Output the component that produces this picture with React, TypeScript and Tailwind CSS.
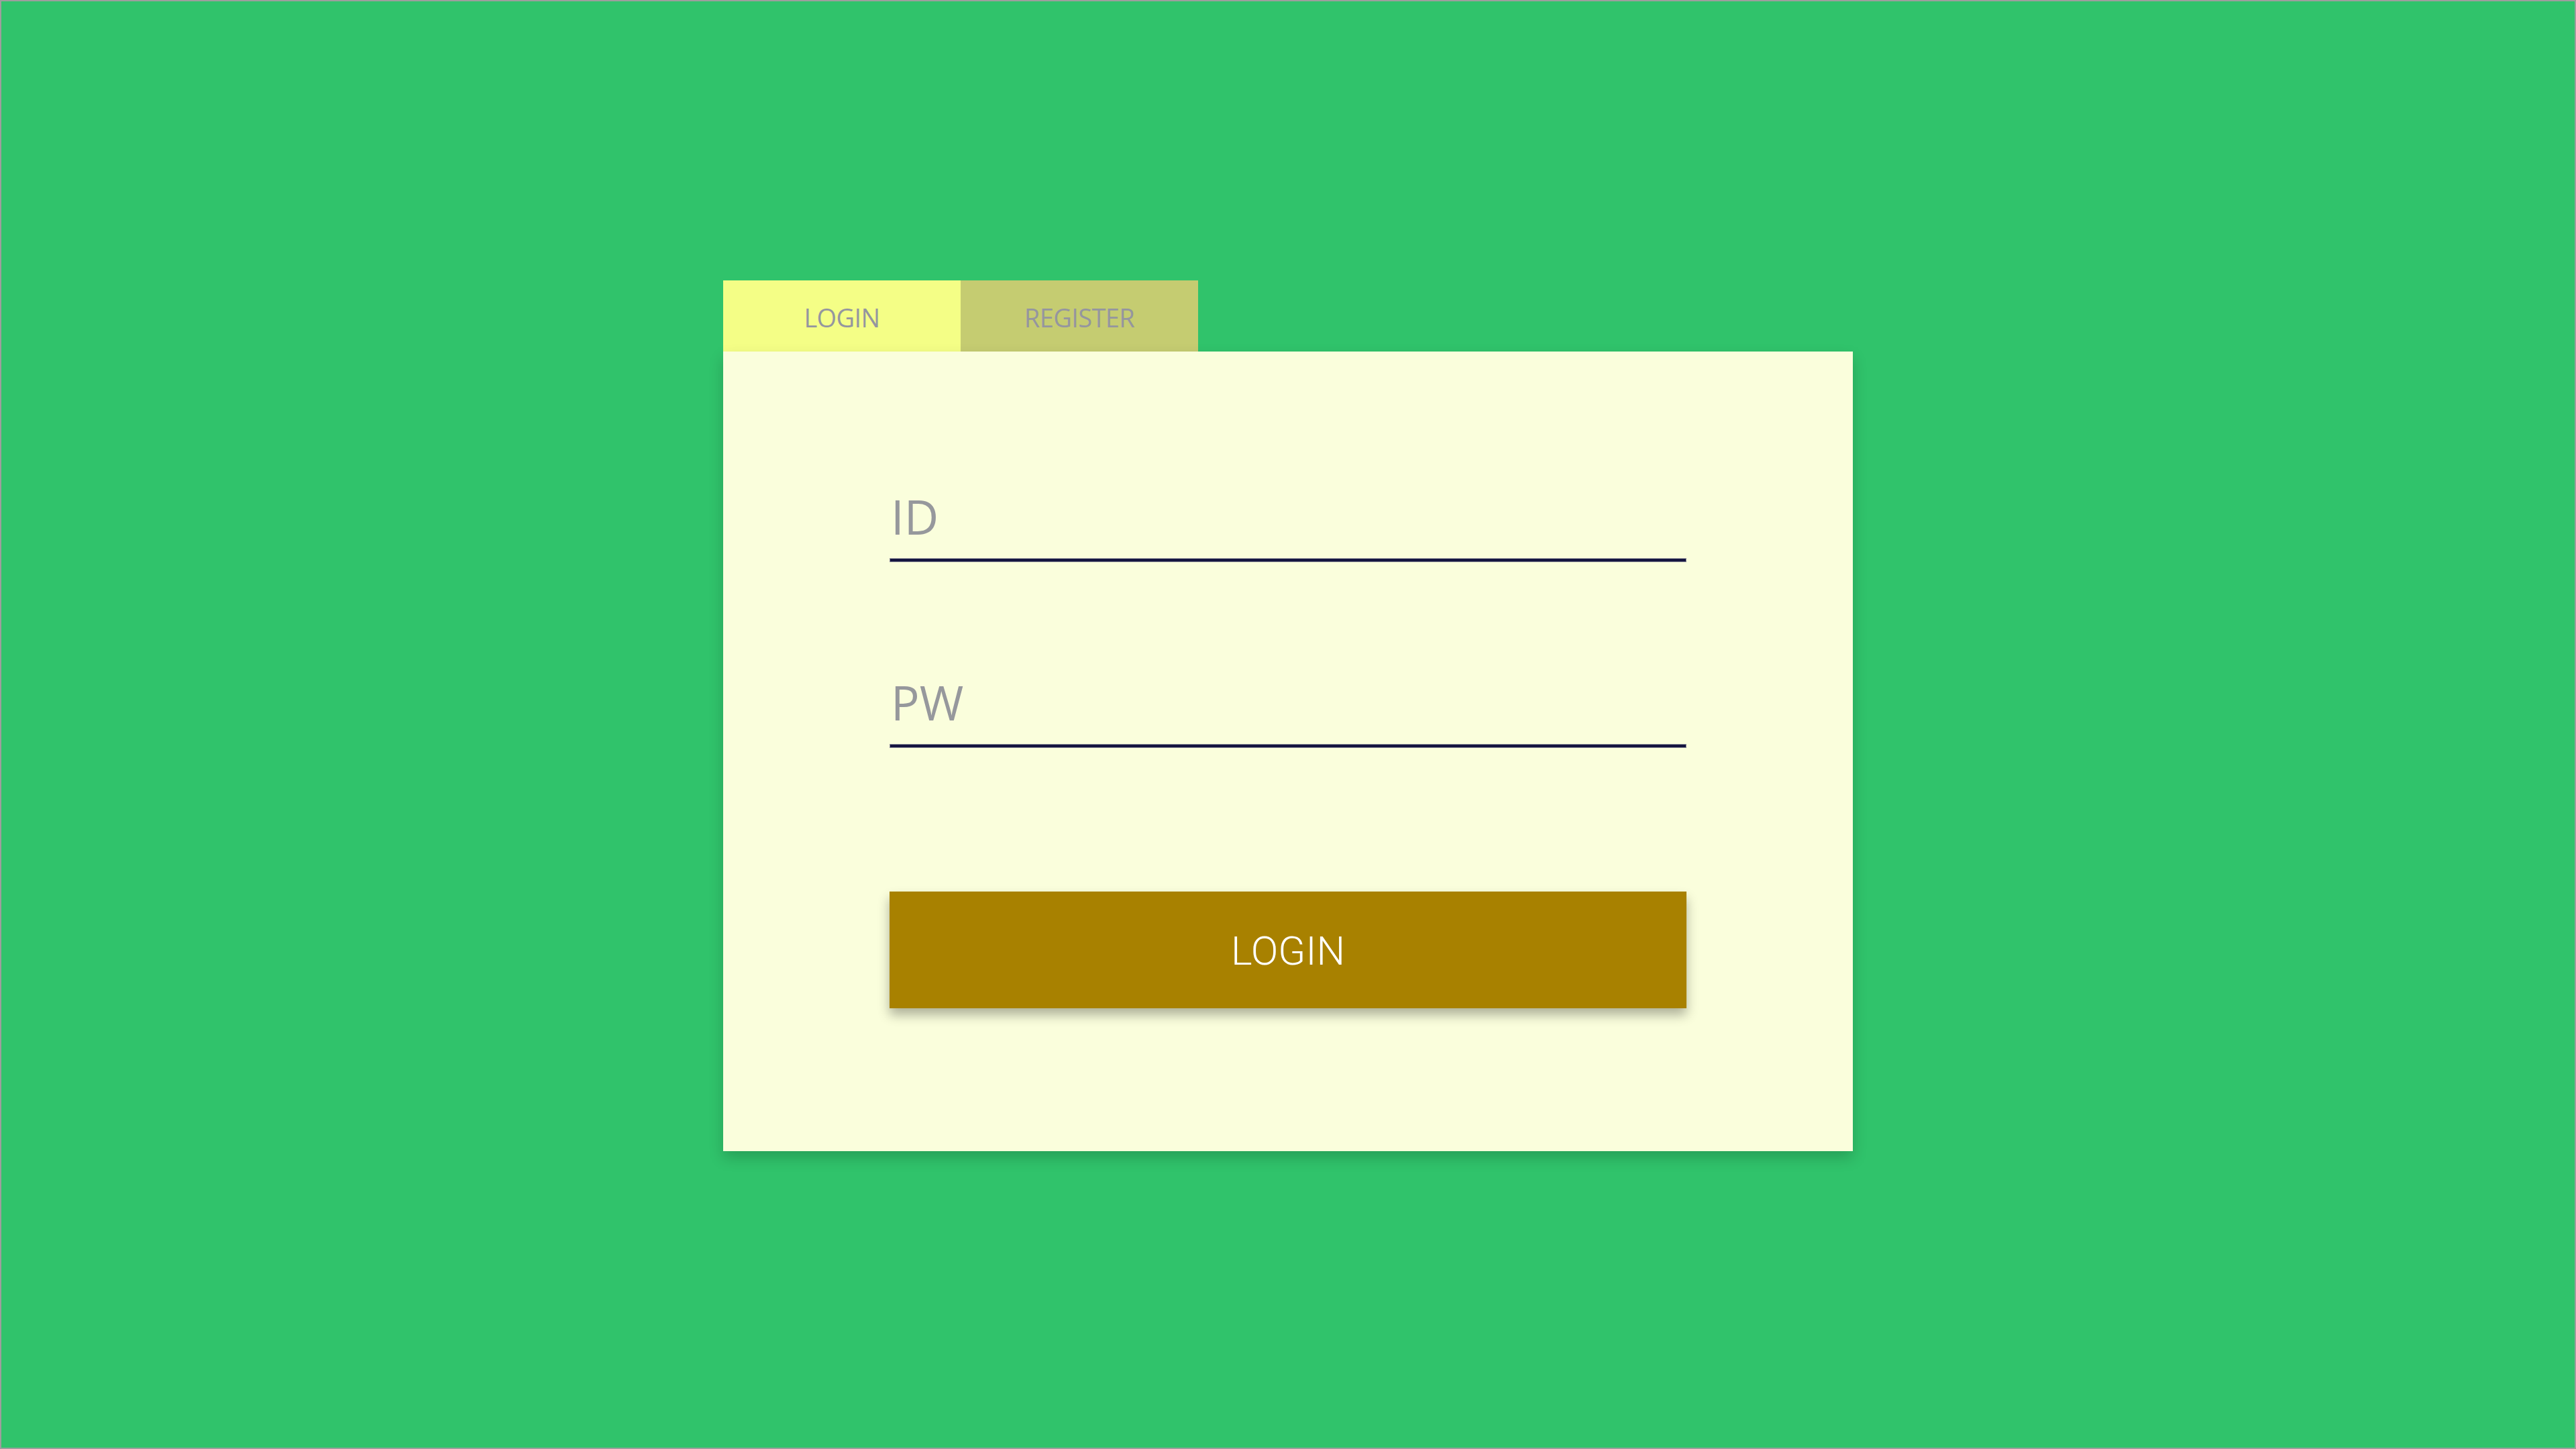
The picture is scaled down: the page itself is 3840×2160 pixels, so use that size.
import { useState } from 'react'

type Tab = 'login' | 'register'

function Field({ label }: { label: string }) {
  return (
    <div className="flex flex-col">
      <div className="pl-[2px] text-[71px] leading-[97px] text-[#96989c]">{label}</div>
      <div className="mt-[14px] h-[6px] bg-[#8f919b] p-[1px]">
        <div className="h-full bg-[#14143f]" />
      </div>
    </div>
  )
}

export default function App() {
  const [tab, setTab] = useState<Tab>('login')

  return (
    <div
      className="flex min-h-screen w-full flex-col items-center border-2 border-[#9e9e9e] bg-[#30c36b] pt-[416px]"
      style={{ fontFamily: '"Open Sans", "Liberation Sans", sans-serif' }}
    >
      <div className="flex w-[1684px] flex-col">
        {/* tabs */}
        <div className="flex">
          <button
            type="button"
            onClick={() => setTab('login')}
            className={[
              'flex h-[106px] w-[354px] items-center justify-center pt-[5px] text-[38px] tracking-[-0.6px] text-[#95969f]',
              tab === 'login' ? 'bg-[#f4fe86]' : 'bg-[#c5cc71]',
            ].join(' ')}
          >
            LOGIN
          </button>
          <button
            type="button"
            onClick={() => setTab('register')}
            className={[
              'flex h-[106px] w-[354px] items-center justify-center pt-[5px] text-[38px] tracking-[-0.6px] text-[#95969f]',
              tab === 'register' ? 'bg-[#f4fe86]' : 'bg-[#c5cc71]',
            ].join(' ')}
          >
            REGISTER
          </button>
        </div>

        {/* card */}
        <div className="flex h-[1192px] flex-col bg-[#fafedc] px-[248px] pt-[197px] shadow-[0_10px_20px_rgba(0,0,0,0.18)]">
          <Field label="ID" />
          <div className="mt-[160px]">
            <Field label="PW" />
          </div>
          <button
            type="button"
            className="mt-[214px] flex h-[174px] w-full items-center justify-center bg-[#a88100] pt-[3px] text-[60px] font-light text-white shadow-[0_10px_16px_rgba(0,0,0,0.3)]"
            style={{ fontFamily: 'Roboto, "Liberation Sans", sans-serif' }}
          >
            LOGIN
          </button>
        </div>
      </div>
    </div>
  )
}
